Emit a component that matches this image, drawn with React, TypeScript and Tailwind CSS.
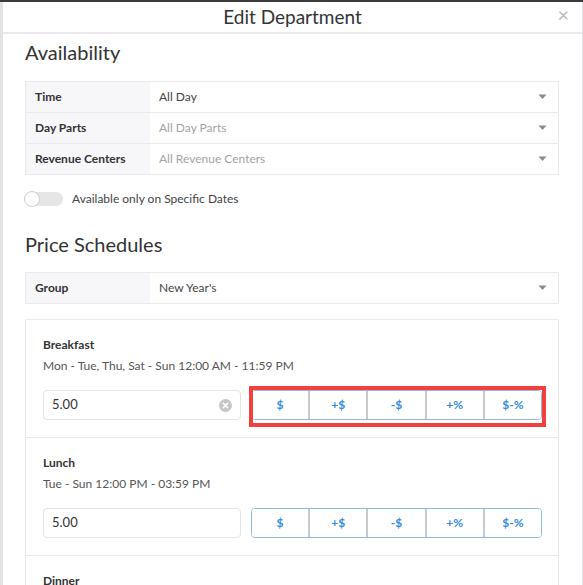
import React from 'react'

const font = { fontFamily: 'Lato, "Noto Sans", sans-serif' }

const modes = ['$', '+$', '-$', '+%', '$-%']

function Caret() {
  return (
    <svg width="9" height="6" viewBox="0 0 9 6" className="shrink-0">
      <path d="M0.5 0.5 H8.5 L4.5 5 Z" fill="#8a8a8a" />
    </svg>
  )
}

function SelectRow({ label, value, muted, last }: { label: string; value: string; muted?: boolean; last?: boolean }) {
  return (
    <div className={`flex ${last ? 'h-[30px]' : 'h-[31px] border-b border-[#ebe9ee]'}`}>
      <div className="w-[124px] shrink-0 bg-[#f7f6f9] pl-[9px] flex items-center text-[12px] font-bold text-[#333]">
        {label}
      </div>
      <div className="flex-1 flex items-center justify-between pl-[9px] pr-[11px]">
        <span className={`text-[12px] ${muted ? 'text-[#a3a3a3]' : 'text-[#444]'}`}>{value}</span>
        <Caret />
      </div>
    </div>
  )
}

function ModeButtons({ highlighted }: { highlighted?: boolean }) {
  return (
    <div className="relative w-[291px]">
      <div className="flex h-[30px] rounded-[4px] border border-[#8dbbe6] overflow-hidden">
        {modes.map((m, i) => (
          <div
            key={m}
            className={`flex-1 flex items-center justify-center text-[12px] font-bold text-[#2f8be0] bg-white ${
              i > 0 ? 'border-l-2 border-[#c9c9c9]' : ''
            }`}
          >
            {m}
          </div>
        ))}
      </div>
      {highlighted && (
        <div className="absolute left-[-2px] right-[-4px] top-[-4px] bottom-[-7px] border-[4px] border-[#f2403f]" />
      )}
    </div>
  )
}

function Schedule({ name, when, value, clear, highlighted, last }: {
  name: string
  when: string
  value?: string
  clear?: boolean
  highlighted?: boolean
  last?: boolean
}) {
  return (
    <div className={`pl-[17px] pr-[16px] pt-[17px] pb-[17px] ${last ? '' : 'border-b border-[#ebe9ee]'}`}>
      <p className="text-[12px] leading-4 font-bold text-[#333]">{name}</p>
      {when && <p className="mt-[5px] text-[12px] leading-4 text-[#555]">{when}</p>}
      {value && (
        <div className="mt-[16px] flex items-center gap-[10px]">
          <div className="w-[198px] h-[30px] rounded-[4px] border border-[#e4e4e4] flex items-center justify-between pl-[8px] pr-[8px]">
            <span className="text-[13px] text-[#333]">{value}</span>
            {clear && (
              <svg width="13" height="13" viewBox="0 0 13 13">
                <circle cx="6.5" cy="6.5" r="6.5" fill="#c6c6c6" />
                <path d="M4.3 4.3 L8.7 8.7 M8.7 4.3 L4.3 8.7" stroke="#fff" strokeWidth="1.6" strokeLinecap="round" />
              </svg>
            )}
          </div>
          <ModeButtons highlighted={highlighted} />
        </div>
      )}
    </div>
  )
}

export default function App() {
  return (
    <div className="w-[583px] h-[585px] overflow-hidden bg-white" style={font}>
      <div className="h-[2px] bg-[#3b3b3b]" />
      <div className="h-[583px] border-l-[3px] border-r border-[#e3e3e6] flex flex-col">
        <div className="h-[32px] shrink-0 relative flex items-center justify-center border-b-2 border-[#ebe9ee]">
          <h1 className="text-[19px] text-[#333]">Edit Department</h1>
          <span className="absolute right-[13px] top-0 text-[20px] leading-6 text-[#b9b9b9]">×</span>
        </div>

        <div className="pl-[22px] pr-[22px]">
          <h2 className="mt-[4px] text-[20px] leading-7 text-[#333]">Availability</h2>

          <div className="mt-[15px] w-[534px] border border-[#ebe9ee]">
            <SelectRow label="Time" value="All Day" />
            <SelectRow label="Day Parts" value="All Day Parts" muted />
            <SelectRow label="Revenue Centers" value="All Revenue Centers" muted last />
          </div>

          <div className="mt-[15px] flex items-center gap-[9px]">
            <div className="relative w-[38px] h-[14px] rounded-full bg-[#e6e6e6]">
              <div className="absolute left-[-1px] top-[-1px] w-[16px] h-[16px] rounded-full bg-white border border-[#cfcfcf]" />
            </div>
            <span className="text-[12px] text-[#444]">Available only on Specific Dates</span>
          </div>

          <h2 className="mt-[22px] text-[20px] leading-7 text-[#333]">Price Schedules</h2>

          <div className="mt-[14px] w-[534px] border border-[#ebe9ee]">
            <SelectRow label="Group" value="New Year's" last />
          </div>

          <div className="mt-[15px] w-[534px] border border-[#ebe9ee]">
            <Schedule
              name="Breakfast"
              when="Mon - Tue, Thu, Sat - Sun 12:00 AM - 11:59 PM"
              value="5.00"
              clear
              highlighted
            />
            <Schedule name="Lunch" when="Tue - Sun 12:00 PM - 03:59 PM" value="5.00" />
            <Schedule name="Dinner" when="" last />
          </div>
        </div>
      </div>
    </div>
  )
}
